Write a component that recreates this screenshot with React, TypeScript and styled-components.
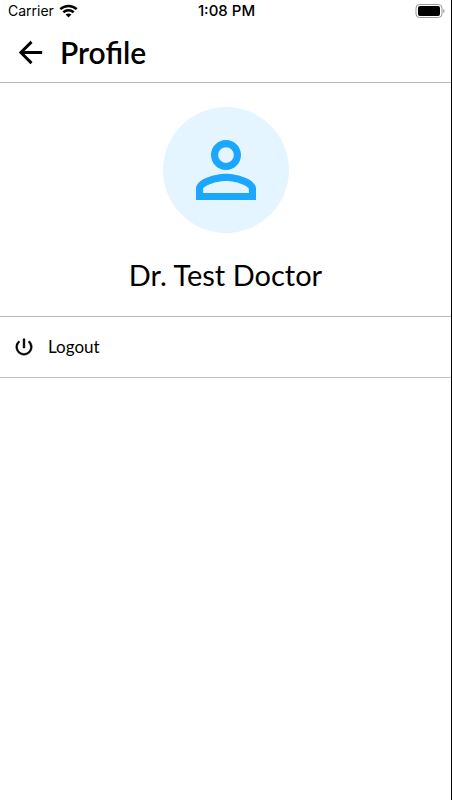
import React from "react";
import styled, { createGlobalStyle } from "styled-components";

const GlobalStyle = createGlobalStyle`
  *, *::before, *::after { box-sizing: border-box; }
  body {
    margin: 0;
    background: #fff;
    color: #000;
    font-family: Lato, sans-serif;
  }
`;

const Screen = styled.div`
  min-height: 100vh;
  border-right: 1px solid #000;
  background: #fff;
`;

const StatusBar = styled.div`
  display: grid;
  grid-template-columns: 1fr auto 1fr;
  align-items: center;
  height: 22px;
  padding: 0 6px 0 8px;
  font-family: Inter, sans-serif;
  font-size: 14px;
  line-height: 22px;
`;

const Carrier = styled.div`
  display: flex;
  align-items: center;
  gap: 5px;
`;

const Clock = styled.time`
  font-size: 15px;
  font-weight: 500;
`;

const BatteryIcon = styled.svg`
  justify-self: end;
`;

const Header = styled.header`
  display: flex;
  align-items: center;
  gap: 12px;
  height: 61px;
  padding: 0 13px;
  border-bottom: 1px solid #b6b5c0;
`;

const BackButton = styled.button`
  display: flex;
  padding: 0;
  border: 0;
  background: none;
  color: inherit;
  cursor: pointer;
`;

const Title = styled.h1`
  margin: 0;
  font-size: 30px;
  font-weight: 600;
  line-height: 36px;
`;

const Summary = styled.section`
  display: flex;
  flex-direction: column;
  align-items: center;
  gap: 24px;
  padding: 24px 16px;
  border-bottom: 1px solid #b6b5c0;
`;

const Avatar = styled.div`
  display: flex;
  align-items: center;
  justify-content: center;
  width: 126px;
  height: 126px;
  border-radius: 50%;
  background: #e4f5ff;
  color: #1ba6ff;
`;

const Name = styled.h2`
  margin: 0;
  font-size: 29px;
  font-weight: 400;
  line-height: 35px;
`;

const MenuButton = styled.button`
  display: flex;
  align-items: center;
  gap: 13px;
  width: 100%;
  height: 61px;
  padding: 0 13px;
  border: 0;
  border-bottom: 1px solid #c2c2c8;
  background: none;
  color: inherit;
  font: 400 17px/24px Lato, sans-serif;
  text-align: left;
  cursor: pointer;
`;

const Icon = ({ size, path, weight = 0 }: { size: number; path: string; weight?: number }) => (
  <svg
    width={size}
    height={size}
    viewBox="0 0 24 24"
    fill="currentColor"
    stroke={weight ? "currentColor" : "none"}
    strokeWidth={weight}
    aria-hidden="true"
  >
    <path d={path} />
  </svg>
);

const ARROW = "M20 11H7.83l5.59-5.59L12 4l-8 8 8 8 1.41-1.41L7.83 13H20v-2z";
const PERSON =
  "M12 5.9a2.1 2.1 0 1 1 0 4.2 2.1 2.1 0 0 1 0-4.2m0 9c2.97 0 6.1 1.46 6.1 2.1v1.1H5.9V17c0-.64 3.13-2.1 6.1-2.1M12 4C9.79 4 8 5.79 8 8s1.79 4 4 4 4-1.79 4-4-1.79-4-4-4zm0 9c-2.67 0-8 1.34-8 4v3h16v-3c0-2.66-5.33-4-8-4z";
const POWER =
  "M13 3h-2v10h2V3zm4.83 2.17-1.42 1.42A6.92 6.92 0 0 1 19 12c0 3.87-3.13 7-7 7s-7-3.13-7-7c0-2.19 1.01-4.14 2.58-5.42L6.17 5.17A8.93 8.93 0 0 0 3 12a9 9 0 0 0 18 0c0-2.74-1.23-5.18-3.17-6.83z";

export default function App() {
  return (
    <>
      <GlobalStyle />
      <Screen>
        <StatusBar>
          <Carrier>
            Carrier
            <svg width="19" height="14" viewBox="0 0 19 14" aria-label="Wi-Fi">
              <g fill="none" stroke="#000" strokeWidth="2.5">
                <path d="M1.3 5.2C6 .8 13 .8 17.7 5.2" />
                <path d="M4.3 8.3C7.3 5.6 11.7 5.6 14.7 8.3" />
              </g>
              <path d="M6.6 10.5c1.7-1.5 4.1-1.5 5.8 0L9.5 13.5z" />
            </svg>
          </Carrier>
          <Clock>1:08 PM</Clock>
          <BatteryIcon width="30" height="16" viewBox="0 0 30 16" aria-label="Battery full">
            <rect x="1" y="1.5" width="26" height="13" rx="3.5" fill="none" stroke="#999" />
            <rect x="3" y="3" width="22" height="10" rx="2" />
            <path d="M28.5 6c1.3.6 1.3 3.4 0 4z" fill="#666" />
          </BatteryIcon>
        </StatusBar>
        <Header>
          <BackButton type="button" aria-label="Back">
            <Icon size={35} path={ARROW} />
          </BackButton>
          <Title>Profile</Title>
        </Header>
        <main>
          <Summary>
            <Avatar>
              <Icon size={90} path={PERSON} />
            </Avatar>
            <Name>Dr. Test Doctor</Name>
          </Summary>
          <MenuButton type="button">
            <Icon size={22} path={POWER} weight={0.5} />
            Logout
          </MenuButton>
        </main>
      </Screen>
    </>
  );
}
